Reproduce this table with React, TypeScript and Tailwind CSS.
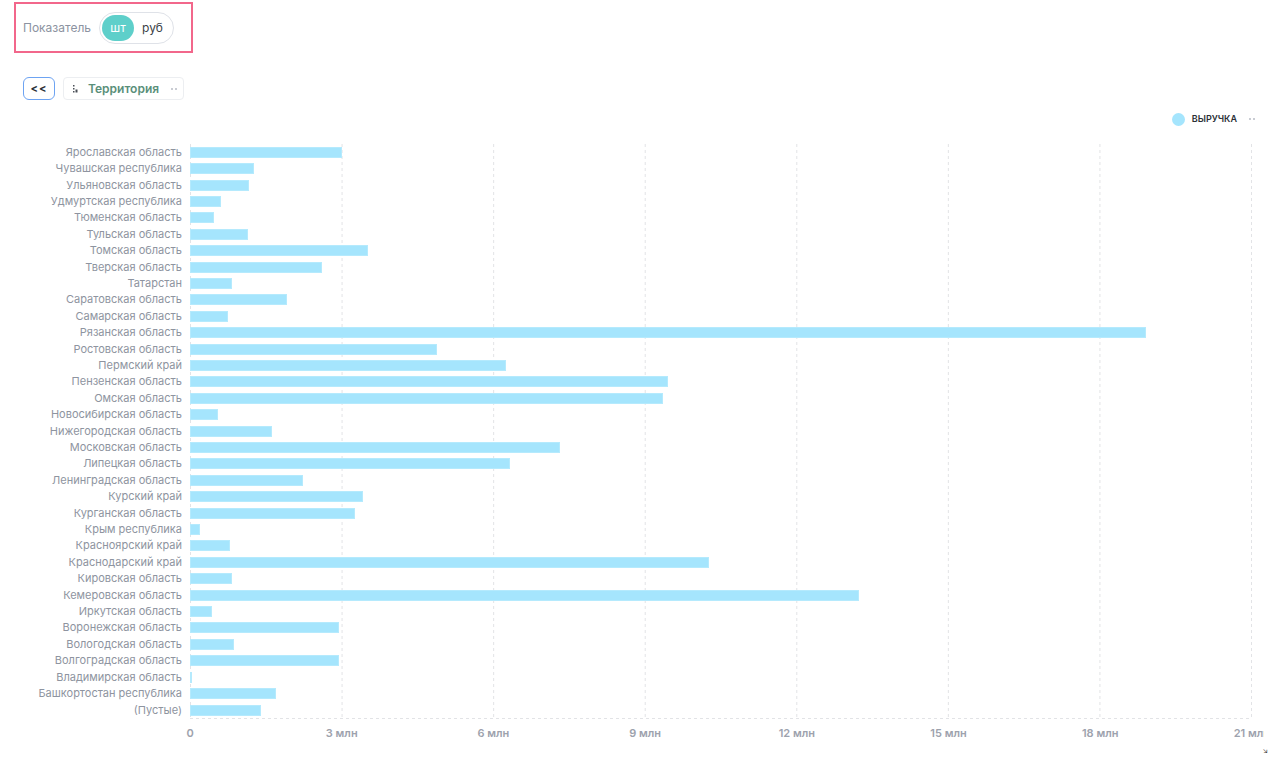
import React from "react";

const rows: [string, number][] = [
  ["Ярославская область", 3.0],
  ["Чувашская республика", 1.27],
  ["Ульяновская область", 1.17],
  ["Удмуртская республика", 0.61],
  ["Тюменская область", 0.47],
  ["Тульская область", 1.15],
  ["Томская область", 3.52],
  ["Тверская область", 2.61],
  ["Татарстан", 0.83],
  ["Саратовская область", 1.92],
  ["Самарская область", 0.75],
  ["Рязанская область", 18.92],
  ["Ростовская область", 4.88],
  ["Пермский край", 6.25],
  ["Пензенская область", 9.47],
  ["Омская область", 9.37],
  ["Новосибирская область", 0.55],
  ["Нижегородская область", 1.62],
  ["Московская область", 7.32],
  ["Липецкая область", 6.33],
  ["Ленинградская область", 2.23],
  ["Курский край", 3.42],
  ["Курганская область", 3.26],
  ["Крым республика", 0.2],
  ["Красноярский край", 0.79],
  ["Краснодарский край", 10.28],
  ["Кировская область", 0.83],
  ["Кемеровская область", 13.25],
  ["Иркутская область", 0.43],
  ["Воронежская область", 2.95],
  ["Вологодская область", 0.87],
  ["Волгоградская область", 2.95],
  ["Владимирская область", 0.04],
  ["Башкортостан республика", 1.7],
  ["(Пустые)", 1.4],
];

const MAX = 21;
const ticks = ["0", "3 млн", "6 млн", "9 млн", "12 млн", "15 млн", "18 млн", "21 млн"];

function Grid() {
  return (
    <svg className="absolute inset-0 h-full w-full" viewBox="0 0 1062 575" preserveAspectRatio="none">
      {ticks.map((_, i) => {
        const x = (i * 1061) / 7 + 0.5;
        return <line key={i} x1={x} x2={x} y1={0} y2={575} stroke="#e2e3e6" strokeWidth={1} strokeDasharray="3 3" />;
      })}
      <line x1={0} x2={1062} y1={574.5} y2={574.5} stroke="#e2e3e6" strokeWidth={1} strokeDasharray="3 3" />
    </svg>
  );
}

function Dots() {
  return (
    <svg width="6" height="2" viewBox="0 0 6 2">
      <rect x="0" y="0" width="2" height="2" fill="#c9ccd3" />
      <rect x="4" y="0" width="2" height="2" fill="#c9ccd3" />
    </svg>
  );
}

export default function App() {
  return (
    <div className="relative h-[758px] w-full overflow-hidden bg-white font-['Inter',sans-serif]">
      <div className="pl-[14px] pt-[2px]">
        <div className="inline-flex h-[51px] w-[179px] items-center gap-[8px] border-2 border-[#f2678b] pl-[7px]">
          <span className="text-[12px] text-[#8c93a1]">Показатель</span>
          <div className="flex h-[32px] items-center rounded-full border border-[#dfe2e8] px-[2px]">
            <span className="flex h-[26px] w-[32px] items-center justify-center rounded-full bg-[#5ecfca] text-[12px] text-white">
              шт
            </span>
            <span className="pl-[8px] pr-[8px] text-[12px] text-[#3b3f47]">руб</span>
          </div>
        </div>
      </div>

      <div className="mt-[24px] flex items-center gap-[8px] pl-[23px]">
        <button className="flex h-[23px] w-[32px] items-center justify-center rounded-[6px] border border-[#6da3f2] text-[11px] font-bold tracking-[1px] text-[#2b2f36]">
          &lt;&lt;
        </button>
        <div className="flex h-[23px] w-[121px] items-center rounded-[4px] border border-[#eceef1] pl-[9px]">
          <svg width="5" height="9" viewBox="0 0 5 9" className="mr-[10px]">
            <rect x="0" y="1" width="1.5" height="1.5" fill="#4a4f57" />
            <rect x="0" y="4" width="1.5" height="1.5" fill="#4a4f57" />
            <rect x="0" y="7" width="1.5" height="1.5" fill="#4a4f57" />
            <rect x="2.5" y="5.5" width="2" height="3" fill="#4a4f57" />
          </svg>
          <span className="text-[12px] font-semibold text-[#5a8f7a]">Территория</span>
          <span className="ml-[12px] flex items-center">
            <Dots />
          </span>
        </div>
      </div>

      <div className="mt-[12px] flex h-[14px] items-center justify-end pr-[16px]">
        <span className="h-[13px] w-[13px] rounded-full bg-[#a5e5fd]" />
        <span className="ml-[7px] text-[9px] font-semibold text-[#2b2f36]">ВЫРУЧКА</span>
        <span className="ml-[12px] flex items-center">
          <Dots />
        </span>
      </div>

      <div className="mt-[18px] flex">
        <div className="flex h-[574px] w-[190px] flex-col pr-[8px]">
          {rows.map(([name]) => (
            <div key={name} className="flex flex-1 items-center justify-end text-[11px] leading-none text-[#8e94a0]">
              {name}
            </div>
          ))}
        </div>
        <div className="relative h-[575px] w-[1062px]">
          <Grid />
          <div className="relative flex h-[574px] flex-col">
            {rows.map(([name, v]) => (
              <div key={name} className="flex flex-1 items-center">
                <div
                  className="h-[11px] border border-[#b5eafd] bg-[#a5e5fd]"
                  style={{ width: `${(v / MAX) * 1061}px` }}
                />
              </div>
            ))}
          </div>
        </div>
      </div>

      <div className="mt-[6px] w-[1264px] overflow-hidden pl-[190px]">
        <div className="flex w-[1062px] justify-between">
          {ticks.map((t) => (
            <div key={t} className="flex w-0 justify-center">
              <span className="whitespace-nowrap text-[11px] font-semibold text-[#9da2ad]">{t}</span>
            </div>
          ))}
        </div>
      </div>

      <span className="absolute bottom-[2px] right-[3px] text-[7px] text-[#333]">↘</span>
    </div>
  );
}
